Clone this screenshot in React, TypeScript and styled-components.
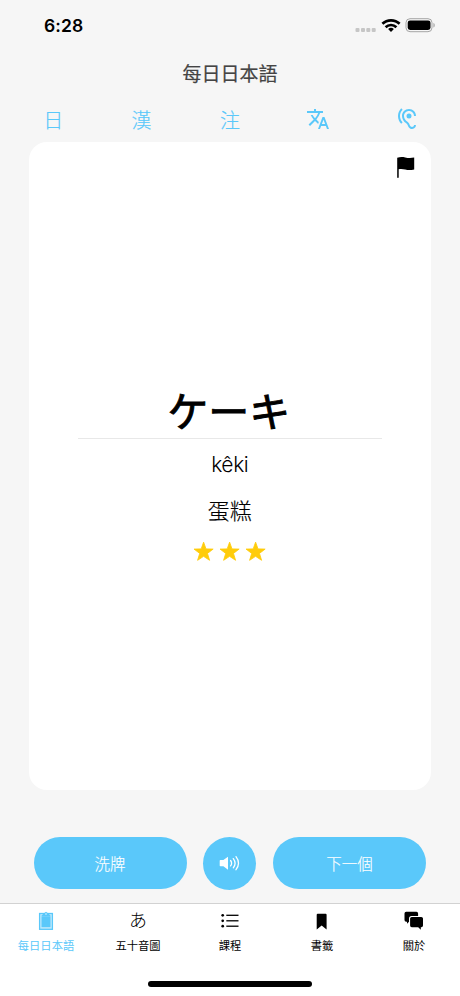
import React from "react";
import styled, { createGlobalStyle } from "styled-components";
import { MdHearing, MdTranslate } from "react-icons/md";

const BLUE = "#5ac8fa";

const GlobalStyle = createGlobalStyle`
  * { box-sizing: border-box; }
  body { margin: 0; background: #f6f6f6; }
  button { border: 0; padding: 0; background: none; font: inherit; color: inherit; }
`;

const Screen = styled.div`
  width: 460px;
  height: 996px;
  display: flex;
  flex-direction: column;
  overflow: hidden;
  background: #f6f6f6;
  color: #000;
  font-family: Inter, "Noto Sans CJK TC", sans-serif;
`;

const StatusBar = styled.div`
  height: 50px;
  flex: none;
  display: flex;
  justify-content: space-between;
  padding: 0 24px 0 44px;
`;

const Clock = styled.span`
  margin-top: 15px;
  font-size: 17.5px;
  line-height: 22px;
  font-weight: 600;
  letter-spacing: 0.1px;
`;

const StatusIcons = styled.div`
  display: flex;
  margin-top: 17px;
`;

const Title = styled.h1`
  flex: none;
  margin: 0;
  height: 46px;
  line-height: 49px;
  text-align: center;
  font-size: 19px;
  font-weight: 400;
  -webkit-text-stroke: 0.2px #444;
  color: #444;
`;

const ModeBar = styled.div`
  flex: none;
  height: 46px;
  padding: 0 9px;
  display: grid;
  grid-template-columns: repeat(5, 1fr);
`;

const ModeButton = styled.button`
  height: 46px;
  display: flex;
  align-items: center;
  justify-content: center;
  color: ${BLUE};
`;

const ModeGlyph = styled.span`
  margin-top: 4px;
  font-size: 20px;
  font-weight: 300;
  line-height: 46px;
  -webkit-text-stroke: 0.2px ${BLUE};
`;

const Card = styled.main`
  flex: none;
  margin: 0 29.5px 0 29px;
  height: 648px;
  border-radius: 18px;
  background: #fff;
  display: flex;
  flex-direction: column;
  align-items: center;
`;

const FlagRow = styled.div`
  align-self: flex-end;
  height: 240px;
  padding: 14px 15px 0 0;
`;

const Word = styled.div`
  height: 56px;
  line-height: 54px;
  padding-right: 2px;
  font-family: "Noto Sans CJK JP", sans-serif;
  font-size: 41px;
  font-weight: 400;
  -webkit-text-stroke: 0.9px #000;
`;

const Divider = styled.hr`
  width: 304px;
  height: 1px;
  margin: 0;
  border: 0;
  background: #e8e8e8;
`;

const Reading = styled.div`
  margin-top: 11px;
  line-height: 30px;
  font-size: 21px;
  letter-spacing: -0.4px;
  font-weight: 300;
`;

const Meaning = styled.div`
  margin-top: 16px;
  line-height: 30px;
  font-size: 22px;
  font-weight: 300;
  -webkit-text-stroke: 0.15px #000;
`;

const Stars = styled.div`
  display: flex;
  gap: 5px;
  margin-top: 15px;
`;

const Actions = styled.div`
  flex: none;
  height: 113px;
  padding: 47px 34px 0 33.5px;
  display: flex;
  align-items: flex-start;
  justify-content: space-between;
`;

const ActionButton = styled.button<{ $round?: boolean }>`
  width: ${(p) => (p.$round ? "53px" : "153px")};
  height: ${(p) => (p.$round ? "53px" : "52px")};
  border-radius: 27px;
  background: ${BLUE};
  color: #fff;
  font-size: 15.5px;
  font-weight: 300;
  -webkit-text-stroke: 0.15px #fff;
  display: flex;
  align-items: center;
  justify-content: center;
`;

const TabBar = styled.nav`
  flex: none;
  height: 78px;
  border-top: 1px solid #d2d2d2;
  background: #fff;
  display: grid;
  grid-template-columns: repeat(5, 1fr);
`;

const Tab = styled.button<{ $active?: boolean }>`
  display: flex;
  flex-direction: column;
  align-items: center;
  color: ${(p) => (p.$active ? BLUE : "#000")};
`;

const TabIcon = styled.span`
  height: 34px;
  display: flex;
  align-items: center;
  font-size: 18px;
  font-weight: 300;
  line-height: 38px;
`;

const TabLabel = styled.span`
  font-size: 11.3px;
  line-height: 17px;
  font-weight: 400;
`;

const HomeArea = styled.div`
  flex: 1;
  background: #fff;
  display: flex;
  justify-content: center;
`;

const HomeIndicator = styled.div`
  width: 164px;
  height: 6px;
  border-radius: 3px;
  background: #000;
`;

const SignalIcon = () => (
  <svg width="22" height="18" viewBox="0 0 22 18" fill="#c6c6c6">
    {[0.5, 6, 11.3, 16.7].map((x) => (
      <rect key={x} x={x} y="11" width="4" height="4" rx="1" />
    ))}
  </svg>
);

const WifiIcon = () => (
  <svg width="28" height="18" viewBox="0 0 28 18" fill="none" stroke="#000" strokeWidth="2.7">
    <path d="M5.4 6.8a12.3 12.3 0 0 1 17.2 0" />
    <path d="M8.6 10.2a7.7 7.7 0 0 1 10.8 0" />
    <path d="M11.1 12.1a4.4 4.4 0 0 1 5.8 0L14 15z" fill="#000" stroke="none" />
  </svg>
);

const BatteryIcon = () => (
  <svg width="31" height="18" viewBox="0 0 31 18">
    <rect x="1" y="1.7" width="26" height="13" rx="4" fill="none" stroke="#a5a5a5" strokeWidth="1" />
    <rect x="2.7" y="3.4" width="22.8" height="9.6" rx="2.4" />
    <path d="M28.5 6v4.5c1.5-.5 1.5-4 0-4.5z" fill="#999" />
  </svg>
);

const FlagIcon = () => (
  <svg width="20" height="22" viewBox="0 0 20 22">
    <path d="M1.2 1.7C4 .7 6.8.8 9.2 1.4c2.8.8 5.5.9 9 .2v11.8c-3.5.9-6.2.8-9 .1-2.3-.6-4.5-.7-6.5-.3v8a.75.75 0 0 1-1.5 0z" />
  </svg>
);

const StarIcon = () => (
  <svg width="21.2" height="21" viewBox="0 0 20 20" fill="#ffcc0a" stroke="#ffcc0a" strokeWidth="0.8" strokeLinejoin="round">
    <path d="M10 1.1l2.3 6.4 6.8.2-5.4 4.1 2 6.6L10 14.6l-5.7 3.8 2-6.6L.9 7.7l6.8-.2z" />
  </svg>
);

const SpeakerIcon = () => (
  <svg width="22" height="18" viewBox="0 0 22 18" fill="none" stroke="#fff" strokeWidth="1.3" strokeLinecap="round">
    <path d="M.7 5.700q0-.7.7-.7h3L9 1.800v13l-4.600-3.500h-3q-.7 0-.7-.7z" fill="#fff" stroke="none" />
    <path d="M11.6 5.500q2 2.700 0 5.400M14.3 3.600q3.600 4.600 0 9.200M17 1.700q5 6.500 0 13" />
  </svg>
);

const ClipboardIcon = () => (
  <svg width="16" height="20" viewBox="0 0 16 20">
    <rect x="1.6" y="2.5" width="12.8" height="15.8" fill="#c3eafc" stroke={BLUE} strokeWidth="1.3" />
    <rect x="3.5" y="5.2" width="9" height="11" fill={BLUE} />
    <path d="M3.2 5l2.1-2.300L8 .8l2.700 1.900 2.100 2.300z" fill={BLUE} />
    <path d="M7.2 3h1.600" stroke="#fff" strokeWidth="0.9" />
  </svg>
);

const ListIcon = () => (
  <svg width="18" height="16" viewBox="0 0 18 16">
    {[2.3, 7.8, 13.2].map((y) => (
      <React.Fragment key={y}>
        <circle cx="1.7" cy={y} r="1.35" />
        <rect x="5.3" y={y - 0.65} width="12.2" height="1.3" />
      </React.Fragment>
    ))}
  </svg>
);

const BookmarkIcon = () => (
  <svg width="12" height="17" viewBox="0 0 12 17">
    <path d="M.7 1.7Q.7.7 1.7.7h7.9q1 0 1 1v14.8l-4.950-4.1-4.950 4.1z" />
  </svg>
);

const ChatIcon = () => (
  <svg width="20" height="20" viewBox="0 0 20 20">
    <path d="M2.2.7h10.2q1.7 0 1.7 1.7v2.5H7.5Q5 4.900 5 7.400v3.300l-2 2v-2H2.200Q.5 10.700.5 9V2.400Q.5.7 2.200.7z" />
    <path d="M7.8 5.9h9.5q1.7 0 1.7 1.7v7q0 1.700-1.700 1.700h-.5v2.400l-2.600-2.400H7.800q-1.700 0-1.700-1.700v-7q0-1.700 1.700-1.700z" />
  </svg>
);

const tabs = [
  { label: "每日日本語", icon: <ClipboardIcon />, active: true },
  { label: "五十音圖", icon: "あ" },
  { label: "課程", icon: <ListIcon /> },
  { label: "書籤", icon: <BookmarkIcon /> },
  { label: "關於", icon: <ChatIcon /> },
];

export default function App() {
  return (
    <Screen lang="zh-Hant">
      <GlobalStyle />
      <StatusBar>
        <Clock>6:28</Clock>
        <StatusIcons>
          <SignalIcon />
          <WifiIcon />
          <BatteryIcon />
        </StatusIcons>
      </StatusBar>
      <Title>每日日本語</Title>
      <ModeBar>
        <ModeButton><ModeGlyph>日</ModeGlyph></ModeButton>
        <ModeButton><ModeGlyph>漢</ModeGlyph></ModeButton>
        <ModeButton><ModeGlyph>注</ModeGlyph></ModeButton>
        <ModeButton><MdTranslate size={24} /></ModeButton>
        <ModeButton><MdHearing size={24} /></ModeButton>
      </ModeBar>
      <Card>
        <FlagRow><FlagIcon /></FlagRow>
        <Word lang="ja">ケーキ</Word>
        <Divider />
        <Reading>kêki</Reading>
        <Meaning>蛋糕</Meaning>
        <Stars><StarIcon /><StarIcon /><StarIcon /></Stars>
      </Card>
      <Actions>
        <ActionButton>洗牌</ActionButton>
        <ActionButton $round aria-label="發音"><SpeakerIcon /></ActionButton>
        <ActionButton>下一個</ActionButton>
      </Actions>
      <TabBar>
        {tabs.map((t) => (
          <Tab key={t.label} $active={t.active}>
            <TabIcon>{t.icon}</TabIcon>
            <TabLabel>{t.label}</TabLabel>
          </Tab>
        ))}
      </TabBar>
      <HomeArea><HomeIndicator /></HomeArea>
    </Screen>
  );
}
